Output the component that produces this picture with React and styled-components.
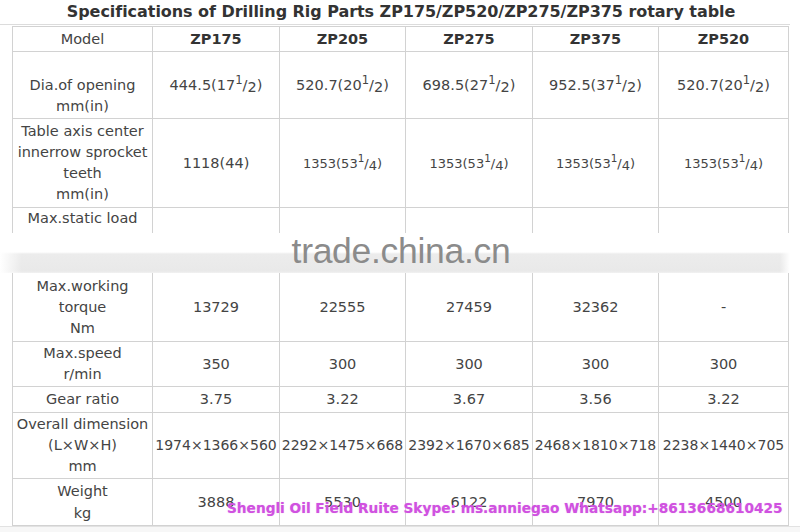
import React from 'react';
import styled, { createGlobalStyle } from 'styled-components';

const GlobalStyle = createGlobalStyle`
  html, body {
    margin: 0;
    padding: 0;
    background: #fff;
  }
  body {
    font-family: "DejaVu Sans", Verdana, sans-serif;
    color: #444;
  }
`;

const Page = styled.div`
  position: relative;
  display: flex;
  flex-direction: column;
  width: 800px;
  height: 532px;
  overflow: hidden;
  background: #fff;
`;

const Title = styled.h1`
  margin: 0;
  height: 25px;
  width: 790px;
  box-sizing: border-box;
  border-bottom: 1px solid #dcdcdc;
  font-size: 16px;
  line-height: 24px;
  font-weight: bold;
  color: #333;
  text-align: center;
  padding-left: 12px;
  letter-spacing: -0.05px;
`;

const Table = styled.table`
  margin: 1px 0 0 12px;
  border-collapse: collapse;
  table-layout: fixed;
  width: 777px;
  font-size: 14.5px;
  line-height: 21px;
  color: #444;
`;

const Row = styled.tr`
  height: ${p => p.h}px;
`;

const Cell = styled.td`
  border: 1px solid #d2d2d2;
  padding: 0;
  text-align: center;
  vertical-align: ${p => (p.top ? 'top' : 'middle')};
  white-space: nowrap;
  font-weight: ${p => (p.head ? 'bold' : 'normal')};
  font-size: ${p => p.size || 'inherit'};
  color: ${p => (p.head ? '#333' : '#444')};
`;

const Sup = styled.sup`
  font-size: 0.8em;
  vertical-align: 6px;
  line-height: 0;
`;

const Sub = styled.span`
  display: inline-block;
  transform: translateY(2px);
`;

const Band = styled.div`
  position: absolute;
  left: 0;
  right: 0;
  top: 233px;
  height: 40px;
  display: flex;
  justify-content: center;
  background:
    linear-gradient(to right, #fff 0, rgba(255,255,255,0) 22px, rgba(255,255,255,0) calc(100% - 20px), #fff calc(100% - 10px)),
    linear-gradient(to bottom, #fff 0, #fff 19px, #ececec 21px, #e9e9e9 38px, #f2f2f2 40px);
  font-family: "Liberation Sans", Arial, sans-serif;
  font-size: 35.5px;
  line-height: 36px;
  color: #8b8b8b;
  letter-spacing: -0.3px;
  padding-left: 2px;
  box-sizing: border-box;
`;

const Contact = styled.div`
  position: absolute;
  left: 227px;
  top: 499px;
  font-family: "DejaVu Sans", Verdana, sans-serif;
  font-weight: bold;
  font-size: 13.7px;
  line-height: 18px;
  color: #d051e0;
  white-space: nowrap;
  text-shadow: 0 0 1px rgba(208, 81, 224, 0.5);
`;

const Footer = styled.div`
  flex: 1;
  border-top: 1px solid #e2e2e2;
  background: #f7f7f7;
`;

const half = n => (
  <>
    {n}
    <Sup>1</Sup>/<Sub>2</Sub>)
  </>
);

const quarter = n => (
  <>
    {n}
    <Sup>1</Sup>/<Sub>4</Sub>)
  </>
);

const models = ['ZP175', 'ZP205', 'ZP275', 'ZP375', 'ZP520'];

const rows = [
  {
    h: 67,
    label: ['\u00a0', 'Dia.of opening', 'mm(in)'],
    values: [half('444.5(17'), half('520.7(20'), half('698.5(27'), half('952.5(37'), half('520.7(20')],
  },
  {
    h: 89,
    label: ['Table axis center', 'innerrow sprocket', 'teeth', 'mm(in)'],
    values: ['1118(44)', quarter('1353(53'), quarter('1353(53'), quarter('1353(53'), quarter('1353(53')],
    size: '13px',
  },
  {
    h: 65,
    label: ['Max.static load'],
    values: ['', '', '', '', ''],
    top: true,
  },
  {
    h: 69,
    label: ['Max.working', 'torque', 'Nm'],
    values: ['13729', '22555', '27459', '32362', '-'],
  },
  {
    h: 45,
    label: ['Max.speed', 'r/min'],
    values: ['350', '300', '300', '300', '300'],
  },
  {
    h: 26,
    label: ['Gear ratio'],
    values: ['3.75', '3.22', '3.67', '3.56', '3.22'],
  },
  {
    h: 66,
    label: ['Overall dimension', '(L\u00d7W\u00d7H)', 'mm'],
    values: [
      '1974\u00d71366\u00d7560',
      '2292\u00d71475\u00d7668',
      '2392\u00d71670\u00d7685',
      '2468\u00d71810\u00d7718',
      '2238\u00d71440\u00d7705',
    ],
    size: '14px',
  },
  {
    h: 47,
    label: ['Weight', 'kg'],
    values: ['3888', '5530', '6122', '7970', '4500'],
    lh: '22px',
  },
];

const Line = styled.div`
  line-height: ${p => p.lh || '21px'};
`;

export default function App() {
  return (
    <Page>
      <GlobalStyle />
      <Title>Specifications of Drilling Rig Parts ZP175/ZP520/ZP275/ZP375 rotary table</Title>
      <Table>
        <colgroup>
          <col style={{ width: 140 }} />
          <col style={{ width: 127 }} />
          <col style={{ width: 126 }} />
          <col style={{ width: 127 }} />
          <col style={{ width: 126 }} />
          <col style={{ width: 130 }} />
        </colgroup>
        <tbody>
          <Row h={25}>
            <Cell>Model</Cell>
            {models.map(m => (
              <Cell head key={m}>{m}</Cell>
            ))}
          </Row>
          {rows.map((r, i) => (
            <Row h={r.h} key={i}>
              <Cell top={r.top}>
                {r.label.map((l, j) => (
                  <Line key={j} lh={r.lh}>{l}</Line>
                ))}
              </Cell>
              {r.values.map((v, j) => (
                <Cell key={j} top={r.top} size={j > 0 || r.size === '14px' ? r.size : undefined}>
                  {v}
                </Cell>
              ))}
            </Row>
          ))}
        </tbody>
      </Table>
      <Footer />
      <Band>trade.china.cn</Band>
      <Contact>Shengli Oil Field Ruite Skype: ms.anniegao Whatsapp:+8613668610425</Contact>
    </Page>
  );
}
